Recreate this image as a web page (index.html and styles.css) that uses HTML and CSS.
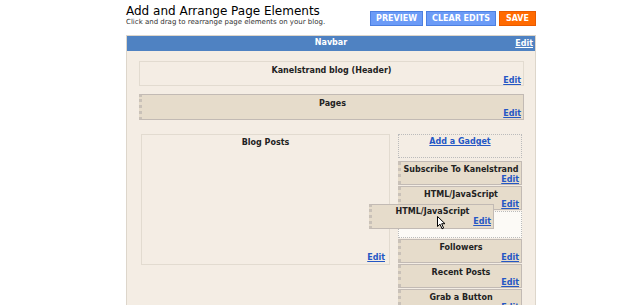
FILE: index.html
```html
<!DOCTYPE html>
<html lang="en">
    <head>
        <meta charset="utf-8" />
        <title>Add and Arrange Page Elements</title>
        <link rel="stylesheet" href="styles.css">
    </head>
    <body>
        <div class="page">
            <div class="top">
                <div class="heading">
                    <h1>Add and Arrange Page Elements</h1>
                    <p>Click and drag to rearrange page elements on your blog.</p>
                </div>
                <div class="buttons">
                    <a class="btn blue">PREVIEW</a>
                    <a class="btn blue">CLEAR EDITS</a>
                    <a class="btn orange">SAVE</a>
                </div>
            </div>

            <div class="panel">
                <div class="navbar">
                    <span class="nav-title">Navbar</span>
                    <a class="nav-edit">Edit</a>
                </div>

                <div class="box header-box">
                    <div class="box-title">Kanelstrand blog (Header)</div>
                    <a class="edit">Edit</a>
                </div>

                <div class="box widget pages">
                    <div class="box-title">Pages</div>
                    <a class="edit">Edit</a>
                </div>

                <div class="columns">
                    <div class="box main">
                        <div class="box-title">Blog Posts</div>
                        <a class="edit">Edit</a>
                    </div>

                    <div class="sidebar">
                        <div class="add-gadget"><a>Add a Gadget</a></div>
                        <div class="box widget">
                            <div class="box-title">Subscribe To Kanelstrand</div>
                            <a class="edit">Edit</a>
                        </div>
                        <div class="box widget">
                            <div class="box-title">HTML/JavaScript</div>
                            <a class="edit">Edit</a>
                        </div>
                        <div class="placeholder"></div>
                        <div class="box widget">
                            <div class="box-title">Followers</div>
                            <a class="edit">Edit</a>
                        </div>
                        <div class="box widget">
                            <div class="box-title">Recent Posts</div>
                            <a class="edit">Edit</a>
                        </div>
                        <div class="box widget">
                            <div class="box-title">Grab a Button</div>
                            <a class="edit">Edit</a>
                        </div>
                    </div>
                </div>

                <!-- widget being dragged -->
                <div class="box widget dragging">
                    <div class="box-title">HTML/JavaScript</div>
                    <a class="edit">Edit</a>
                    <svg class="cursor" width="9" height="14" viewBox="0 0 9 14">
                        <path d="M0.5 0.5 L0.5 10.5 L3 8.2 L5 12.8 L6.6 12.1 L4.7 7.7 L8 7.7 Z" fill="#fff" stroke="#000" stroke-width="1" />
                    </svg>
                </div>
            </div>
        </div>
    </body>
</html>
```

FILE: styles.css
```css
body {
    margin: 0;
    background: #fff;
    font-family: "DejaVu Sans", Verdana, sans-serif;
    overflow: hidden;
}
.page {
    margin-left: 126px;
    width: 410px;
}
.top {
    display: flex;
    justify-content: space-between;
    align-items: flex-start;
    height: 35px;
}
.heading h1 {
    margin: 4px 0 0 0;
    font-size: 12px;
    font-weight: normal;
    line-height: 14px;
    color: #000;
}
.heading p {
    margin: 0;
    font-size: 7px;
    line-height: 8px;
    color: #333;
}
.buttons {
    display: flex;
    gap: 3px;
    margin-top: 11px;
}
.btn {
    display: block;
    height: 13px;
    line-height: 13px;
    padding: 0 5px;
    font-size: 8px;
    font-weight: bold;
    color: #fff;
    border: 1px solid;
}
.btn.blue {
    background: #6b9bf7;
    border-color: #4c7fe0;
}
.btn.orange {
    background: #ff6a00;
    border-color: #e85a00;
    padding: 0 6px;
}
.panel {
    position: relative;
    background: #f4ede4;
    border: 1px solid #ddd6cb;
    border-bottom: none;
    height: 270px;
}
.navbar {
    position: relative;
    height: 15px;
    background: #4f82c2;
    text-align: center;
    color: #fff;
    font-size: 8px;
    font-weight: bold;
    line-height: 13px;
}
.nav-edit {
    position: absolute;
    right: 2px;
    top: 1px;
    color: #fff;
    text-decoration: underline;
}
.box {
    position: relative;
    box-sizing: border-box;
    border: 1px solid #e2dbd0;
    font-size: 8px;
    font-weight: bold;
    color: #222;
}
.box-title {
    text-align: center;
    padding-top: 4px;
    line-height: 10px;
}
.edit {
    display: block;
    text-align: right;
    padding-right: 2px;
    line-height: 9px;
    color: #2457c4;
    text-decoration: underline;
}
.header-box {
    margin: 10px 11px 0 12px;
    height: 25px;
}
.widget {
    background: #e6dccb;
    border: 1px solid #c2bab4;
    border-left: 3px dotted #c9c1b8;
}
.pages {
    margin: 8px 11px 0 12px;
    height: 26px;
}
.columns {
    display: flex;
    margin: 14px 13px 0 14px;
    gap: 8px;
}
.main {
    width: 249px;
    height: 131px;
    display: flex;
    flex-direction: column;
    justify-content: space-between;
}
.main .box-title {
    padding-top: 3px;
}
.main .edit {
    padding-right: 4px;
    padding-bottom: 2px;
}
.sidebar {
    width: 124px;
    display: flex;
    flex-direction: column;
}
.add-gadget {
    box-sizing: border-box;
    height: 24px;
    border: 1px dotted #bbb;
    text-align: center;
    font-size: 8px;
    font-weight: bold;
    padding-top: 2px;
    margin-bottom: 3px;
}
.add-gadget a {
    color: #2457c4;
    text-decoration: underline;
}
.sidebar .widget {
    height: 24px;
    margin-bottom: 1px;
}
.sidebar .widget .box-title {
    padding-top: 3px;
}
.placeholder {
    box-sizing: border-box;
    height: 27px;
    margin-bottom: 1px;
    background: #fcfaf6;
    border: 1px dotted #bbb;
}
.dragging {
    position: absolute;
    left: 242px;
    top: 168px;
    width: 125px;
    height: 25px;
    margin: 0;
}
.dragging .box-title {
    padding-top: 2px;
}
.cursor {
    position: absolute;
    left: 65px;
    top: 11px;
}
```
